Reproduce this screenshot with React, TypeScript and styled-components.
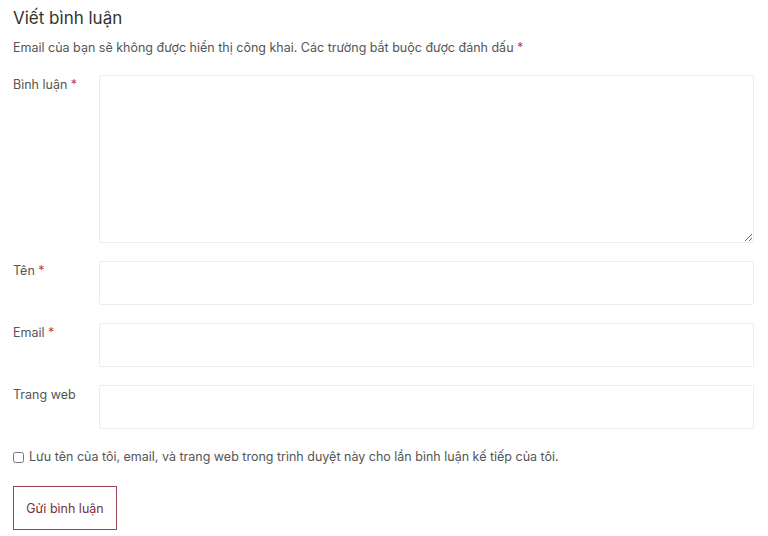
import styled, { createGlobalStyle } from 'styled-components';

const GlobalStyle = createGlobalStyle`
    body {
        margin: 0;
        background: #ffffff;
        font-family: Inter, "Noto Sans", sans-serif;
        color: #444444;
    }
`;

const Wrapper = styled.div`
    padding: 8px 14px 0 13px;
`;

const Title = styled.h3`
    margin: 0;
    font-size: 17px;
    font-weight: 400;
    line-height: 20px;
    color: #333333;
`;

const Notice = styled.p`
    margin: 12px 0 0;
    font-size: 12.5px;
    line-height: 16px;
    color: #555555;
`;

const Required = styled.span`
    color: #d0334e;
`;

const Form = styled.form`
    margin-top: 19px;
    display: flex;
    flex-direction: column;
    gap: 18px;
`;

const FieldRow = styled.div`
    display: grid;
    grid-template-columns: 86px 1fr;
    align-items: start;
`;

const Label = styled.label`
    font-size: 12.5px;
    line-height: 16px;
    color: #555555;
    padding-top: 2px;
`;

const TextInput = styled.input`
    box-sizing: border-box;
    height: 44px;
    width: 100%;
    border: 1px solid #ececec;
    border-radius: 2px;
    background: #fff;
    font: inherit;
`;

const TextArea = styled.textarea`
    box-sizing: border-box;
    height: 168px;
    width: 100%;
    border: 1px solid #ececec;
    border-radius: 2px;
    background: #fff;
    font: inherit;
    display: block;
`;

const CheckRow = styled.label`
    display: flex;
    align-items: center;
    gap: 5px;
    margin-top: 2px;
    font-size: 12.5px;
    line-height: 16px;
    color: #555555;
`;

const Check = styled.input`
    margin: 0;
    width: 11px;
    height: 11px;
`;

const SubmitButton = styled.button`
    align-self: flex-start;
    margin-top: 3px;
    width: 104px;
    height: 44px;
    background: #fff;
    border: 1px solid #9a4655;
    color: #7a2e3a;
    font-family: Inter, "Noto Sans", sans-serif;
    font-size: 12.5px;
    cursor: pointer;
`;

const fields = [
    { id: 'author', label: 'Tên', required: true },
    { id: 'email', label: 'Email', required: true },
    { id: 'url', label: 'Trang web', required: false },
];

export default function App() {
    return (
        <>
            <GlobalStyle />
            <Wrapper>
                <Title>Viết bình luận</Title>
                <Notice>
                    Email của bạn sẽ không được hiển thị công khai. Các trường bắt buộc được đánh dấu <Required>*</Required>
                </Notice>
                <Form onSubmit={(e) => e.preventDefault()}>
                    <FieldRow>
                        <Label htmlFor="comment">Bình luận <Required>*</Required></Label>
                        <TextArea id="comment" />
                    </FieldRow>
                    {fields.map((f) => (
                        <FieldRow key={f.id}>
                            <Label htmlFor={f.id}>
                                {f.label} {f.required && <Required>*</Required>}
                            </Label>
                            <TextInput id={f.id} type="text" />
                        </FieldRow>
                    ))}
                    <CheckRow>
                        <Check type="checkbox" />
                        Lưu tên của tôi, email, và trang web trong trình duyệt này cho lần bình luận kế tiếp của tôi.
                    </CheckRow>
                    <SubmitButton type="submit">Gửi bình luận</SubmitButton>
                </Form>
            </Wrapper>
        </>
    );
}
